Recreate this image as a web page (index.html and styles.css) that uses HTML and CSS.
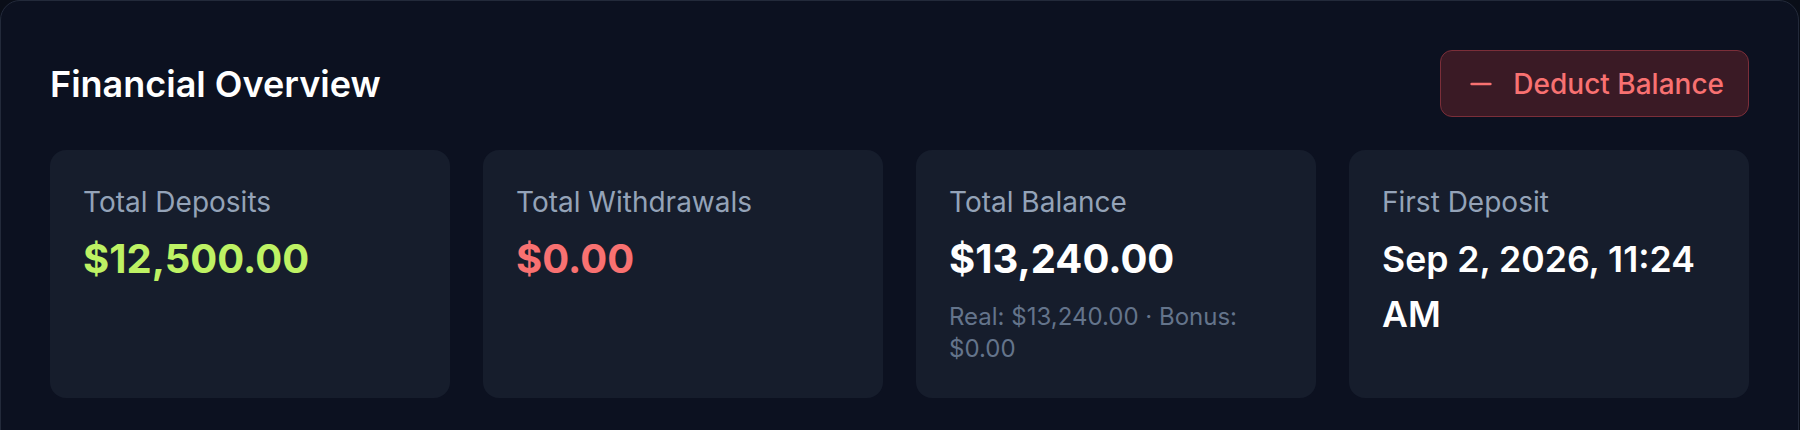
FILE: index.html
```html
<!DOCTYPE html>
<html lang="en">
<head>
<meta charset="utf-8">
<title>Financial Overview</title>
<link rel="stylesheet" href="styles.css">
</head>
<body>
<section class="panel">
  <header class="panel-head">
    <h2 class="panel-title">Financial Overview</h2>
    <button class="btn-deduct" type="button">
      <svg class="btn-icon" viewBox="0 0 24 24" width="32" height="32" aria-hidden="true"><path d="M5 12h14" fill="none" stroke="currentColor" stroke-width="2" stroke-linecap="round"/></svg>
      <span>Deduct Balance</span>
    </button>
  </header>
  <div class="stats">
    <div class="stat">
      <div class="stat-label">Total Deposits</div>
      <div class="stat-value value-green">$12,500.00</div>
    </div>
    <div class="stat">
      <div class="stat-label">Total Withdrawals</div>
      <div class="stat-value value-red">$0.00</div>
    </div>
    <div class="stat">
      <div class="stat-label">Total Balance</div>
      <div class="stat-value value-white">$13,240.00</div>
      <div class="stat-sub">Real: $13,240.00 · Bonus: $0.00</div>
    </div>
    <div class="stat">
      <div class="stat-label">First Deposit</div>
      <div class="stat-value stat-date">Sep 2, 2026, 11:24 AM</div>
    </div>
  </div>
</section>
</body>
</html>
```

FILE: styles.css
```css
* { box-sizing: border-box; }

html, body {
  margin: 0;
  padding: 0;
  background: #0a0e18;
  overflow: hidden;
}

body {
  font-family: Inter, "Noto Sans", "Liberation Sans", sans-serif;
  color: #ffffff;
  width: 1800px;
  height: 430px;
}

.panel {
  width: 1799px;
  min-height: 470px;
  background: #0c1120;
  border: 1px solid #232a3a;
  border-radius: 20px;
  padding: 49px;
}

.panel-head {
  display: flex;
  align-items: center;
  justify-content: space-between;
  margin-bottom: 33px;
}

.panel-title {
  margin: 0;
  font-size: 36px;
  font-weight: 600;
  line-height: 44px;
  color: #ffffff;
}

.btn-deduct {
  display: flex;
  align-items: center;
  gap: 16px;
  height: 67px;
  padding: 0 24px 0 24px;
  background: #3a1a25;
  border: 1.75px solid #7b2e39;
  border-radius: 12px;
  color: #f87171;
  font-family: inherit;
  font-size: 28px;
  font-weight: 500;
  cursor: pointer;
}

.btn-icon { display: block; flex: none; }

.stats {
  display: grid;
  grid-template-columns: repeat(4, 1fr);
  gap: 33px;
}

.stat {
  background: #161d2c;
  border-radius: 16px;
  padding: 33px;
  height: 248px;
}

.stat-label {
  font-size: 28px;
  line-height: 38px;
  color: #94a3b8;
}

.stat-value {
  margin-top: 10px;
  font-size: 40px;
  line-height: 55px;
  font-weight: 700;
}

.value-green { color: #bef264; }
.value-red { color: #f87171; }
.value-white { color: #ffffff; }

.stat-date {
  margin-top: 11px;
  font-weight: 600;
  font-size: 35.6px;
}

.stat-sub {
  margin-top: 15px;
  font-size: 24px;
  line-height: 32px;
  color: #64748b;
}
```
